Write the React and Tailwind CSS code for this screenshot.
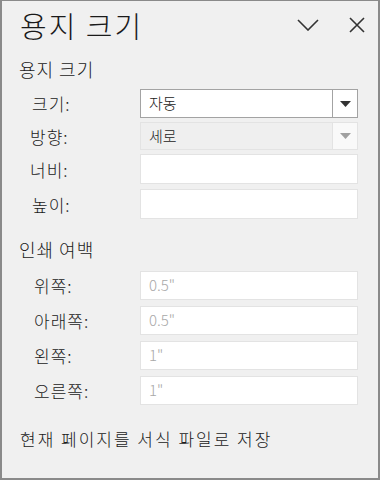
import React from 'react';

const FONT = { fontFamily: '"Malgun Gothic", "Noto Sans CJK KR", "Noto Sans", sans-serif' };

const Caret = ({ color }) => (
  <svg width="11" height="6" viewBox="0 0 11 6">
    <path d="M0 0 L11 0 L5.5 6 Z" fill={color} />
  </svg>
);

const MARGINS = [
  ['위쪽:', '0.5"'],
  ['아래쪽:', '0.5"'],
  ['왼쪽:', '1"'],
  ['오른쪽:', '1"'],
];

const labelCls = 'w-[138px] text-[17px] tracking-[1px] leading-none';

export default function App() {
  return (
    <div style={FONT} className="w-[380px] h-[480px] bg-[#f0f0f0] border-x-2 border-b-2 border-t border-[#8a8a8a] flex flex-col text-[#1a1a1a] font-light">
      <div className="flex items-center h-[44px] pl-[18px] pr-[13px] mt-[2px]">
        <div className="flex-1 text-[29px] leading-none tracking-[2px]">용지 크기</div>
        <svg width="22" height="12" viewBox="0 0 22 12" className="mr-[30px]">
          <path d="M1 1 L11 11 L21 1" fill="none" stroke="#333" strokeWidth="1.6" />
        </svg>
        <svg width="16" height="16" viewBox="0 0 16 16">
          <path d="M1 1 L15 15 M15 1 L1 15" fill="none" stroke="#333" strokeWidth="1.6" />
        </svg>
      </div>

      <div className="pr-[20px]">
        <div className="pl-[17px] mt-[10px] h-[24px] text-[18px] tracking-[1px] flex items-center">용지 크기</div>

        <div className="mt-[8px] flex flex-col">
          <div className="flex items-center h-[29px]">
            <div className={`${labelCls} pl-[30px]`}>크기:</div>
            <div className="flex-1 h-[29px] bg-white border border-[#a3a3a3] flex items-center">
              <div className="flex-1 px-[8px] text-[15px]">자동</div>
              <div className="w-[25px] h-full border-l border-[#a3a3a3] flex items-center justify-center">
                <Caret color="#333" />
              </div>
            </div>
          </div>
          <div className="flex items-center h-[28px] mt-[4px]">
            <div className={`${labelCls} pl-[28px]`}>방향:</div>
            <div className="flex-1 h-[28px] bg-[#efefef] border border-[#e3e3e3] flex items-center">
              <div className="flex-1 px-[8px] text-[15px]">세로</div>
              <div className="w-[25px] h-full border-l border-[#e3e3e3] bg-[#f9f9f9] flex items-center justify-center">
                <Caret color="#a0a0a0" />
              </div>
            </div>
          </div>
          <div className="flex items-center h-[30px] mt-[4px]">
            <div className={`${labelCls} pl-[28px]`}>너비:</div>
            <div className="flex-1 h-[30px] bg-white border border-[#e3e3e3]" />
          </div>
          <div className="flex items-center h-[30px] mt-[5px]">
            <div className={`${labelCls} pl-[30px]`}>높이:</div>
            <div className="flex-1 h-[30px] bg-white border border-[#e3e3e3]" />
          </div>
        </div>

        <div className="pl-[17px] mt-[18px] h-[24px] text-[18px] tracking-[1px] flex items-center">인쇄 여백</div>

        <div className="mt-[10px] flex flex-col gap-[6px]">
          {MARGINS.map(([label, value]) => (
            <div key={label} className="flex items-center h-[29px]">
              <div className={`${labelCls} pl-[32px]`}>{label}</div>
              <div className="flex-1 h-[29px] bg-white border border-[#e3e3e3] flex items-center px-[8px] text-[15px] text-[#a8a8a8]">
                {value}
              </div>
            </div>
          ))}
        </div>

        <div className="pl-[18px] mt-[22px] h-[24px] text-[17px] tracking-[2px] flex items-center">현재 페이지를 서식 파일로 저장</div>
      </div>
    </div>
  );
}
